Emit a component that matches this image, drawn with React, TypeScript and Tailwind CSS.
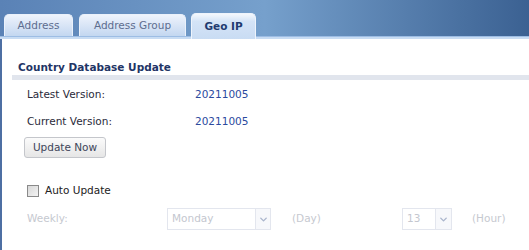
import { ChevronDown } from 'lucide-react';

const font = { fontFamily: '"Century Gothic", "URW Gothic", "DejaVu Sans", sans-serif' };

function Tab({ label, active, width }: { label: string; active?: boolean; width: string }) {
  if (active) {
    return (
      <div
        className={`${width} h-[26px] rounded-t-[5px] border border-b-0 border-[#eef4fc] bg-gradient-to-b from-[#f4f8fd] from-0% via-[#d4e4f7] via-30% to-[#c9dcf3] flex items-center justify-center text-[10.5px] font-bold text-[#213b70]`}
      >
        {label}
      </div>
    );
  }
  return (
    <div
      className={`${width} h-[22px] rounded-t-[5px] border border-b-0 border-[#eaf1fb] bg-gradient-to-b from-[#eef4fc] from-0% via-[#dfe9f8] via-35% to-[#c3d7f0] flex items-center justify-center text-[10.5px] text-[#5d6d8f]`}
    >
      {label}
    </div>
  );
}

function Select({ value, width, boxWidth }: { value: string; width: string; boxWidth: string }) {
  return (
    <div className={`${width} h-[22px] flex border border-[#e3e6ee] bg-white`}>
      <div className={`${boxWidth} flex items-center pl-[4px] text-[10.5px] text-[#c4c7cf]`}>{value}</div>
      <div className="flex-1 flex items-center justify-center border-l border-[#e3e6ee] bg-[#f7f8fb]">
        <ChevronDown size={11} strokeWidth={3} className="text-[#aab5cc]" />
      </div>
    </div>
  );
}

export default function App() {
  return (
    <div className="w-[529px] h-[250px] bg-white overflow-hidden" style={font}>
      {/* header with tabs */}
      <div className="h-[36px] bg-gradient-to-r from-[#5a82b6] via-[#76a0cc] to-[#3b6192] flex items-end pl-[4px] gap-[6px]">
        <Tab label="Address" width="w-[69px]" />
        <Tab label="Address Group" width="w-[107px]" />
        <div className="-mb-[3px] ml-[-1px]">
          <Tab label="Geo IP" active width="w-[65px]" />
        </div>
      </div>
      <div className="h-[3px] bg-[#c8dcf3] border-t border-[#9dbde4]" />

      <div className="h-[211px] border-l-2 border-[#4e6fa3] pt-[21px]">
        <div className="pl-[16px] text-[10.5px] font-bold text-[#1f3566] leading-[14px]">Country Database Update</div>
        <div className="ml-[10px] mt-[1px] h-[5px] bg-[#e1e5ed]" />

        <div className="pl-[25px] text-[10.5px] text-[#2a2a3a]">
          <div className="flex items-center h-[16px] mt-[7px]">
            <span className="w-[168px]">Latest Version:</span>
            <span className="text-[#2c4a9e]">20211005</span>
          </div>
          <div className="flex items-center h-[16px] mt-[11px]">
            <span className="w-[168px]">Current Version:</span>
            <span className="text-[#2c4a9e]">20211005</span>
          </div>
          <button className="mt-[7px] -ml-[3px] w-[82px] h-[21px] rounded-[3px] border border-[#c4c6cb] bg-gradient-to-b from-[#fbfbfb] to-[#e6e6e6] text-[10.5px] text-[#40465a]">
            Update Now
          </button>

          <div className="flex items-center mt-[27px] h-[12px]">
            <span className="w-[12px] h-[12px] border border-[#8a8a8a] bg-gradient-to-br from-[#d8d8d8] to-[#f4f4f4]" />
            <span className="ml-[6px] text-[#222]">Auto Update</span>
          </div>

          <div className="flex items-center mt-[11px] h-[22px]">
            <span className="w-[140px] text-[#c6c9d0]">Weekly:</span>
            <Select value="Monday" width="w-[104px]" boxWidth="w-[87px]" />
            <span className="ml-[21px] w-[110px] text-[#c6c9d0]">(Day)</span>
            <Select value="13" width="w-[50px]" boxWidth="w-[32px]" />
            <span className="ml-[20px] text-[#c6c9d0]">(Hour)</span>
          </div>
        </div>
      </div>
    </div>
  );
}
